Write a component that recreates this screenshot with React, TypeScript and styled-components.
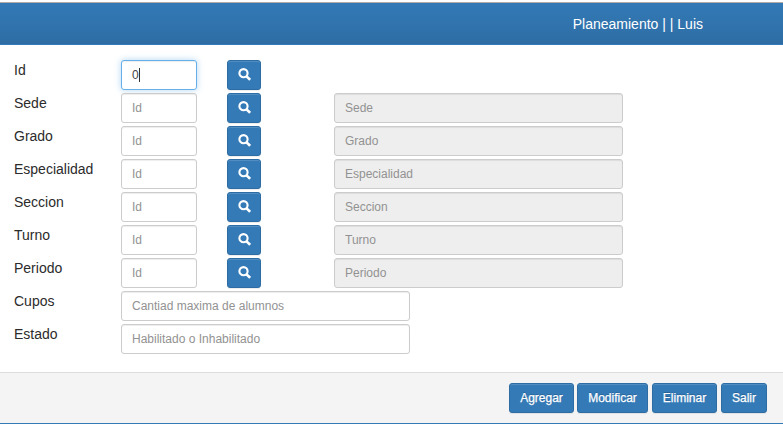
import React from "react";
import styled, { createGlobalStyle, css } from "styled-components";

const GlobalStyle = createGlobalStyle`
  *, *::before, *::after { box-sizing: border-box; }
  body {
    margin: 0;
    background: #fff;
    color: #333;
    font: 14px/20px "Liberation Sans", Arial, sans-serif;
  }
`;

const Page = styled.div`
  display: flex;
  flex-direction: column;
  height: 424px;
  overflow: hidden;
  padding-top: 2px;
`;

const Header = styled.header`
  height: 43px;
  flex: none;
  display: flex;
  justify-content: flex-end;
  padding: 11px 80px 0 0;
  color: #fff;
  border-top: 1px solid #b5aaa8;
  border-bottom: 1px solid #337ab7;
  background: linear-gradient(to bottom, #337ab7 0%, #2e6da4 100%);
`;

const Form = styled.form`
  flex: 1;
  display: flex;
  flex-direction: column;
  gap: 3px;
  padding: 15px 14px 0;
`;

const Row = styled.div`
  display: grid;
  grid-template-columns: 107px 106px 107px 289px;
  height: 30px;
  flex: none;
`;

const Label = styled.label`
  color: #2b2b2b;
`;

const fieldBox = css`
  height: 30px;
  border: 1px solid #ccc;
  border-radius: 3px;
  padding: 5px 10px;
  font: 12px/18px "Liberation Sans", Arial, sans-serif;
  color: #444;
  background: #fff;
  box-shadow: inset 0 1px 1px rgba(0, 0, 0, 0.075);
`;

const Field = styled.input<{ $wide?: boolean }>`
  ${fieldBox}
  width: ${(p) => (p.$wide ? 289 : 76)}px;
  outline: 0;
  &::placeholder { color: #929292; opacity: 1; }
  &:disabled { background: #eee; }
`;

const ActiveField = styled.div`
  ${fieldBox}
  width: 76px;
  display: flex;
  border-color: #66afe9;
  box-shadow: inset 0 1px 1px rgba(0, 0, 0, 0.075), 0 0 6px rgba(102, 175, 233, 0.5);
`;

const Caret = styled.span`
  width: 1px;
  height: 14px;
  margin-top: 2px;
  background: #333;
`;

const Button = styled.button`
  height: 30px;
  border: 1px solid #2e6da4;
  border-radius: 3px;
  padding: 0;
  color: #fff;
  background: #337ab7;
  font: 12px/18px "Liberation Sans", Arial, sans-serif;
  text-shadow: 0 -1px 0 rgba(0, 0, 0, 0.2);
  box-shadow: inset 0 1px 0 rgba(255, 255, 255, 0.15), 0 1px 1px rgba(0, 0, 0, 0.075);
`;

const SearchButton = styled(Button)`
  width: 34px;
  display: flex;
  justify-content: center;
  padding-top: 7px;
`;

const ActionButton = styled(Button)<{ $width: number }>`
  width: ${(p) => p.$width}px;
  -webkit-text-stroke: 0.25px #fff;
`;

const Footer = styled.footer`
  height: 52px;
  flex: none;
  display: flex;
  justify-content: flex-end;
  gap: 4px;
  padding: 10px 16px 0 0;
  background: #f4f4f4;
  border-top: 1px solid #ddd;
  border-bottom: 1px solid #337ab7;
`;

const Actions = styled.div`
  display: flex;
  gap: 3px;
`;

const SearchIcon = () => (
  <svg width="13" height="13" viewBox="0 0 13 13" fill="none" stroke="#fff" aria-hidden="true">
    <circle cx="5.5" cy="5.2" r="4.1" strokeWidth="2.1" />
    <path d="M8.3 8.1 L12.1 11.8" strokeWidth="2.6" />
  </svg>
);

const lookups = ["Sede", "Grado", "Especialidad", "Seccion", "Turno", "Periodo"];

const Search = () => (
  <SearchButton type="button" aria-label="Buscar">
    <SearchIcon />
  </SearchButton>
);

export default function App() {
  return (
    <Page>
      <GlobalStyle />
      <Header>Planeamiento | | Luis</Header>
      <Form>
        <Row>
          <Label>Id</Label>
          <ActiveField>
            0<Caret />
          </ActiveField>
          <Search />
        </Row>
        {lookups.map((name) => (
          <Row key={name}>
            <Label>{name}</Label>
            <Field placeholder="Id" />
            <Search />
            <Field $wide disabled placeholder={name} />
          </Row>
        ))}
        <Row>
          <Label>Cupos</Label>
          <Field $wide placeholder="Cantiad maxima de alumnos" />
        </Row>
        <Row>
          <Label>Estado</Label>
          <Field $wide placeholder="Habilitado o Inhabilitado" />
        </Row>
      </Form>
      <Footer>
        <Actions>
          <ActionButton $width={65}>Agregar</ActionButton>
          <ActionButton $width={71}>Modificar</ActionButton>
        </Actions>
        <ActionButton $width={65}>Eliminar</ActionButton>
        <ActionButton $width={46}>Salir</ActionButton>
      </Footer>
    </Page>
  );
}
